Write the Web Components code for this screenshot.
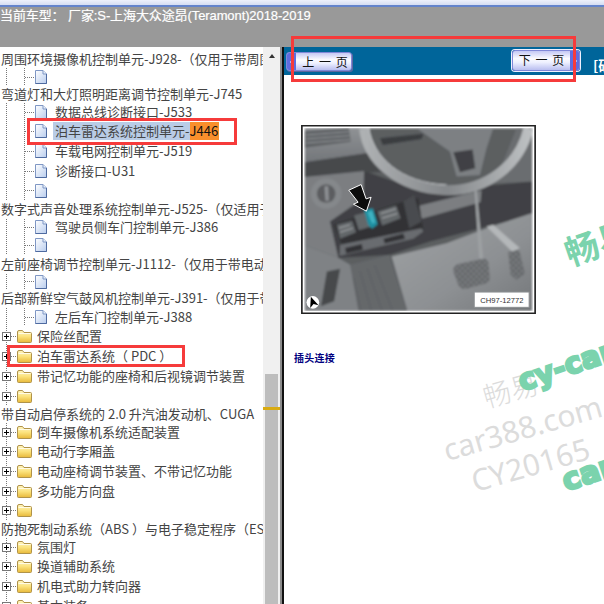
<!DOCTYPE html>
<html lang="zh">
<head>
<meta charset="utf-8">
<title>车型维修资料</title>
<style>
  html, body { margin: 0; padding: 0; background: #fff; }
  body { width: 604px; height: 604px; overflow: hidden; position: relative; }
</style>
</head>
<body>
<title-bar>当前车型： 厂家:S-上海大众途昂(Teramont)2018-2019</title-bar>
<split-view>
  <tree-pane slot="tree">
    <tree-row kind="plain" h="18">周围环境摄像机控制单元-J928-（仅用于带周围环境摄像机的车辆）</tree-row>
    <tree-row kind="leaf" h="18"></tree-row>
    <tree-row kind="plain" h="17">弯道灯和大灯照明距离调节控制单元-J745</tree-row>
    <tree-row kind="leaf" h="18">数据总线诊断接口-J533</tree-row>
    <tree-row kind="leaf" h="20"><hit-text>泊车雷达系统控制单元-<hit-term>J446</hit-term></hit-text></tree-row>
    <tree-row kind="leaf" h="20">车载电网控制单元-J519</tree-row>
    <tree-row kind="leaf" h="20">诊断接口-U31</tree-row>
    <tree-row kind="leaf" h="19"></tree-row>
    <tree-row kind="plain" h="19">数字式声音处理系统控制单元-J525-（仅适用于带数字式声音处理系统）</tree-row>
    <tree-row kind="leaf" h="16">驾驶员侧车门控制单元-J386</tree-row>
    <tree-row kind="leaf" h="20"></tree-row>
    <tree-row kind="plain" h="19">左前座椅调节控制单元-J1112-（仅用于带电动座椅调节装置）</tree-row>
    <tree-row kind="leaf" h="15"></tree-row>
    <tree-row kind="plain" h="19">后部新鲜空气鼓风机控制单元-J391-（仅用于带后部空调）</tree-row>
    <tree-row kind="leaf" h="18">左后车门控制单元-J388</tree-row>
    <tree-row kind="folder" h="20">保险丝配置</tree-row>
    <tree-row kind="folder" h="20">泊车雷达系统（ PDC ）</tree-row>
    <tree-row kind="folder" h="20">带记忆功能的座椅和后视镜调节装置</tree-row>
    <tree-row kind="folder" h="20"></tree-row>
    <tree-row kind="plain" h="17">带自动启停系统的 2.0 升汽油发动机、CUGA</tree-row>
    <tree-row kind="folder" h="18">倒车摄像机系统适配装置</tree-row>
    <tree-row kind="folder" h="20">电动行李厢盖</tree-row>
    <tree-row kind="folder" h="20">电动座椅调节装置、不带记忆功能</tree-row>
    <tree-row kind="folder" h="20">多功能方向盘</tree-row>
    <tree-row kind="folder" h="19"></tree-row>
    <tree-row kind="plain" h="18">防抱死制动系统（ABS ）与电子稳定程序（ESP）</tree-row>
    <tree-row kind="folder" h="18">氛围灯</tree-row>
    <tree-row kind="folder" h="20">换道辅助系统</tree-row>
    <tree-row kind="folder" h="20">机电式助力转向器</tree-row>
    <tree-row kind="folder" h="20">基本装备</tree-row>
  </tree-pane>
  <doc-pane slot="doc">
    <page-toolbar>
      <page-button slot="prev" dir="prev">上 一 页</page-button>
      <page-button slot="next" dir="next">下 一 页</page-button>
      <span slot="extra">[硬</span>
    </page-toolbar>
    <car-figure label="CH97-12772"></car-figure>
    <doc-heading>插头连接</doc-heading>
  </doc-pane>
</split-view>
<water-mark></water-mark>
<red-box style="left:27px;top:118px;width:210px;height:27px"></red-box>
<red-box style="left:7px;top:345px;width:178px;height:22px"></red-box>
<red-box style="left:291px;top:36px;width:285px;height:46px"></red-box>

<script>
class ShadowBase extends HTMLElement {
  static get markup() {
    return '';
  }

  connectedCallback() {
    if (!this.shadowRoot) {
      this.attachShadow({mode: 'open'});
      const template = document.createElement('template');
      template.innerHTML = this.constructor.markup;
      this.shadowRoot.appendChild(template.content.cloneNode(true));
      this.ready();
    }
  }

  ready() {}
}

class TitleBar extends ShadowBase {
  static get markup() {
    return `<style>
      :host { display: block; height: 47px; background: #999; }
      .glass { height: 5px; background: linear-gradient(#eef1fb, #d5ddf2); }
      .line { height: 2px; background: #6484cc; }
      .text { height: 17px; display: flex; align-items: center; white-space: pre; letter-spacing: -.1px;
        color: #fff; -webkit-text-stroke: .2px #fff; font: 13px/17px "Liberation Sans", "Noto Sans CJK SC", sans-serif; }
    </style>
    <div class="glass"></div><div class="line"></div>
    <div class="text"><slot></slot></div>`;
  }
}

class SplitView extends ShadowBase {
  static get markup() {
    return `<style>
      :host { display: flex; height: 557px; overflow: hidden; }
      .tree { flex: 0 0 263px; width: 263px; overflow: hidden; }
      .track { flex: 0 0 17px; background: #f0f0f0; display: flex; flex-direction: column; align-items: center; position: relative; }
      .up { width: 0; height: 0; margin-top: 7px; border: 3.5px solid transparent; border-top: 0; border-bottom: 4px solid #333; }
      .thumb { width: 13px; height: 230px; margin-top: 316px; background: #bdbdbd; }
      .mark { position: absolute; left: 0; right: 0; top: 360px; height: 3px; background: #d9ab12; }
      .rule { flex: 0 0 2px; background: #8c8c8c; }
      .edge { flex: 0 0 2px; background: #111; }
      .doc { flex: 1; min-width: 0; overflow: hidden; }
    </style>
    <div class="tree"><slot name="tree"></slot></div>
    <div class="track"><div class="up"></div><div class="thumb"></div><div class="mark"></div></div>
    <div class="rule"></div><div class="edge"></div>
    <div class="doc"><slot name="doc"></slot></div>`;
  }
}

class TreePane extends ShadowBase {
  static get markup() {
    return `<style>
      :host { display: block; height: 100%; padding-top: 3px; box-sizing: border-box; overflow: hidden; background: #fff;
        color: #444; font: 13px "Noto Sans CJK SC", "Liberation Sans", sans-serif; }
    </style><slot></slot>`;
  }
}

const DOTS_V = 'repeating-linear-gradient(to bottom, #777 0 1px, transparent 1px 2px)';
const DOTS_H = 'repeating-linear-gradient(to right, #777 0 1px, transparent 1px 2px)';

const FILE_ICON = `<svg width="12" height="14" viewBox="0 0 12 14">
  <defs><linearGradient id="f" x1="0" y1="0" x2="1" y2="1"><stop offset="0" stop-color="#fff"/><stop offset="1" stop-color="#b9cdee"/></linearGradient></defs>
  <path d="M.5.5H8L11.5 4V13.5H.5Z" fill="url(#f)" stroke="#7f97c4"/>
  <path d="M8 .5V4H11.5" fill="#e8effb" stroke="#7f97c4"/>
  <path d="M11.5 4V13.5H.5" fill="none" stroke="#4e6aa0"/>
</svg>`;

const FOLDER_ICON = `<svg width="15" height="13" viewBox="0 0 15 13">
  <defs><linearGradient id="d" x1="0" y1="0" x2="0" y2="1"><stop offset="0" stop-color="#fff6c4"/><stop offset=".5" stop-color="#fbe27c"/><stop offset="1" stop-color="#e8b93a"/></linearGradient></defs>
  <path d="M.5 3V11.5Q.5 12.5 1.5 12.5H13.5Q14.5 12.5 14.5 11.5V3.5Q14.5 2.5 13.5 2.5H7L5.5 .5H2Q.5 .5 .5 2Z" fill="url(#d)" stroke="#b0934a"/>
  <path d="M1.5 3.5H13.5" stroke="#fffbe6"/>
</svg>`;

const PLUS_BOX = `<svg width="9" height="9" viewBox="0 0 9 9">
  <rect x=".5" y=".5" width="8" height="8" fill="#fff" stroke="#777"/>
  <path d="M2 4.5H7M4.5 2V7" stroke="#000"/>
</svg>`;

class TreeRow extends ShadowBase {
  static get markup() {
    return `<style>
      :host { display: flex; align-items: center; white-space: pre; height: 20px; background-repeat: no-repeat; }
      .icons { display: flex; align-items: center; flex: none; }
      .label { display: block; margin-top: -2px; }
      svg { display: block; }
      :host([kind="plain"]) { padding-left: 1px; }
      :host([kind="leaf"]) { padding-left: 35px; }
      :host([kind="leaf"]) .icons { margin-right: 8px; }
      :host([kind="folder"]) { padding-left: 2px; }
      :host([kind="folder"]) .plus { margin-right: 6px; }
      :host([kind="folder"]) .icons { margin-right: 5px; }
    </style>
    <div class="icons"></div><div class="label"><slot></slot></div>`;
  }

  ready() {
    const kind = this.getAttribute('kind');
    const height = Number(this.getAttribute('h')) || 20;
    this.style.height = height + 'px';
    const mid = Math.floor(height / 2);
    const icons = this.shadowRoot.querySelector('.icons');
    if (kind === 'leaf') {
      icons.innerHTML = FILE_ICON;
      this.style.backgroundImage = [DOTS_V, DOTS_V, DOTS_H].join(',');
      this.style.backgroundSize = `1px ${height}px, 1px ${height}px, 10px 1px`;
      this.style.backgroundPosition = `6px 0, 24px 0, 25px ${mid}px`;
    } else if (kind === 'folder') {
      icons.innerHTML = `<span class="plus">${PLUS_BOX}</span>${FOLDER_ICON}`;
      this.style.backgroundImage = [DOTS_V, DOTS_H].join(',');
      this.style.backgroundSize = `1px ${height}px, 6px 1px`;
      this.style.backgroundPosition = `6px 0, 11px ${mid}px`;
    }
  }
}

class HitText extends ShadowBase {
  static get markup() {
    return `<style>
      :host { display: inline-block; height: 18px; line-height: 18px; padding-left: 2px; margin-left: -2px; background: #b9cce6; color: #444; }
    </style><slot></slot>`;
  }
}

class HitTerm extends ShadowBase {
  static get markup() {
    return `<style>
      :host { display: inline-block; height: 18px; padding-right: 1px; background: #f98f2c; color: #111; }
    </style><slot></slot>`;
  }
}

class DocPane extends ShadowBase {
  static get markup() {
    return `<style>
      :host { display: block; height: 100%; background: #fff; }
    </style><slot></slot>`;
  }
}

class PageToolbar extends ShadowBase {
  static get markup() {
    return `<style>
      :host { display: flex; align-items: flex-start; height: 28px; background: #00659a; padding-left: 2px; overflow: hidden; }
      .prev { margin-top: 5px; }
      .next { margin-top: 3px; margin-left: auto; }
      .extra { margin: 9px 0 0 13px; width: 11px; flex: none; white-space: nowrap; color: #fff;
        font: bold 14px/18px "Noto Sans CJK SC", sans-serif; }
    </style>
    <div class="prev"><slot name="prev"></slot></div>
    <div class="next"><slot name="next"></slot></div>
    <div class="extra"><slot name="extra"></slot></div>`;
  }
}

class PageButton extends ShadowBase {
  static get markup() {
    return `<style>
      :host { display: flex; box-sizing: border-box; height: 19px; width: 66px; border: 1px solid #8088d8; border-radius: 3px;
        overflow: hidden; color: #111; background: linear-gradient(#c4c8f4, #fbfbff 40%, #eef0ff 60%, #b9bef0);
        box-shadow: 1px 1px 0 #5f66a0; font: 12px/17px "Noto Sans CJK SC", sans-serif; white-space: pre; word-spacing: 2px; }
      :host([dir="next"]) { flex-direction: row-reverse; height: 21px; width: 68px; border: 1px solid #8088d8; box-shadow: 0 0 0 1px #f0f0ff; }
      .tab { flex: 0 0 9px; display: flex; align-items: center; justify-content: center; background: #5f6ce0; }
      .label { flex: 1; text-align: center; padding-left: 3px; }
      :host([dir="next"]) .label { line-height: 17px; padding-left: 0; }
      svg { display: block; }
    </style>
    <div class="tab"></div><div class="label"><slot></slot></div>`;
  }

  ready() {
    const back = this.getAttribute('dir') === 'prev';
    const points = back ? '5,0 5,8 1,4' : '1,0 1,8 5,4';
    this.shadowRoot.querySelector('.tab').innerHTML =
      `<svg width="6" height="8" viewBox="0 0 6 8"><polygon points="${points}" fill="#fff"/></svg>`;
  }
}

class CarFigure extends ShadowBase {
  static get markup() {
    return `<style>
      :host { display: block; width: 235px; height: 189px; margin: 50px 0 0 17px; }
      svg { display: block; width: 235px; height: 189px; }
      text { font-family: "Liberation Sans", sans-serif; }
    </style>
    <svg viewBox="33 30 705 568">
      <defs>
        <filter id="soft" x="0" y="0" width="1" height="1"><feGaussianBlur stdDeviation="2.4"/></filter>
        <linearGradient id="floor" x1="0" y1="0" x2="1" y2="1"><stop offset="0" stop-color="#a0a3a5"/><stop offset=".6" stop-color="#8d9093"/><stop offset="1" stop-color="#74777a"/></linearGradient>
        <linearGradient id="wheel" x1="0" y1="0" x2="1" y2="0"><stop offset="0" stop-color="#aeb1b3"/><stop offset=".5" stop-color="#85888b"/><stop offset="1" stop-color="#bcbfc1"/></linearGradient>
        <linearGradient id="dash" x1="0" y1="0" x2="0" y2="1"><stop offset="0" stop-color="#8f9295"/><stop offset="1" stop-color="#73767a"/></linearGradient>
        <pattern id="hatch" width="12" height="12" patternUnits="userSpaceOnUse" patternTransform="rotate(45)">
          <rect width="12" height="12" fill="#777a7d"/><path d="M0 0H12M0 0V12" stroke="#45474a" stroke-width="2.5"/>
        </pattern>
      </defs>
      <rect x="33" y="30" width="705" height="568" fill="#fff"/>
      <rect x="35" y="32" width="701" height="564" fill="none" stroke="#222" stroke-width="5"/>
      <g filter="url(#soft)">
        <rect x="44" y="40" width="683" height="548" fill="#5b5e61"/>
        <!-- dash and vent -->
        <path d="M44 40H230L262 110L44 142Z" fill="url(#dash)"/>
        <path d="M44 48L176 40L182 80L44 98Z" fill="#5f6265"/>
        <path d="M48 60L176 50M48 72L178 62M48 84L180 74" stroke="#93969a" stroke-width="3"/>
        <path d="M44 142L250 112L290 170L44 186Z" fill="#47494c"/>
        <path d="M44 186L225 168L222 250L120 320L145 430L44 392Z" fill="#7b7e81"/>
        <circle cx="108" cy="236" r="46" fill="#85888b"/>
        <circle cx="108" cy="236" r="28" fill="#5b5d60"/>
        <path d="M103 214H114L116 258H106Z" fill="#8e9194"/>
        <!-- right dash panel -->
        <path d="M222 168L400 230L726 200V300L590 335L420 380L300 420L145 430L120 320L220 250Z" fill="#3f4144"/>
        <path d="M378 275L575 226L572 262L395 312Z" fill="#7b7e81"/>
        <!-- floor and pedals -->
        <path d="M305 425L470 385L590 340L726 295V588H352Z" fill="url(#floor)"/>
        <path d="M726 40V200L600 205L640 140L680 40Z" fill="#6a6d70"/>
        <path d="M590 335L610 330L690 400L668 412Z" fill="#b4b7b9"/>
        <path d="M552 200L558 200L580 432L568 432Z" fill="#9da0a3"/>
        <path d="M505 448L578 432Q592 430 596 445L600 490Q600 503 588 506L530 522Q512 525 505 510L490 470Q488 455 505 448Z" fill="url(#hatch)"/>
        <path d="M655 412L688 405L706 478L680 495L662 480Z" fill="url(#hatch)"/>
        <!-- steering wheel -->
        <path d="M380 40H610L590 100L570 180L500 185L480 110Z" fill="#7d8083"/>
        <path d="M490 112L548 104L556 160L510 172Z" fill="#3f4144"/>
        <path d="M222 40C232 130 320 222 470 226C590 228 690 150 716 40" fill="none" stroke="url(#wheel)" stroke-width="30"/>
        <path d="M236 40C250 125 330 205 470 210" fill="none" stroke="#c2c5c7" stroke-width="3"/>
        <path d="M270 70L400 56L395 72L278 90Z" fill="#3a3c3f"/>
        <!-- connector bracket -->
        <path d="M132 330L335 262L385 250L400 345L156 392Z" fill="#313235"/>
        <path d="M150 390L395 340L400 350L370 372L148 424Z" fill="#696c70"/>
        <path d="M340 260L372 240L395 320L358 340Z" fill="#4a4c50"/>
        <path d="M140 330L186 318L198 352L150 372ZM192 302L236 290L246 334L206 346ZM262 290L318 272L332 310L276 332Z" fill="#64676b"/>
        <path d="M146 340L180 330M150 352L188 340M272 296L318 282M276 310L322 296" stroke="#a9acae" stroke-width="3"/>
        <path d="M165 400L215 388L218 405L168 416ZM280 372L340 356L345 372L284 386Z" fill="#313235"/>
        <path d="M222 286L248 280L263 328L246 342L234 330Z" fill="#1f8fa0"/>
        <path d="M232 292L246 288L256 322L246 326Z" fill="#3fb3c2"/>
        <!-- knee panel -->
        <path d="M180 450L298 420L350 588H205Z" fill="#65686b"/>
        <path d="M190 490L212 588M210 470L244 588M232 462L276 588M254 452L308 588" stroke="#57595c" stroke-width="2"/>
        <path d="M44 392L145 430L180 450L205 588H44Z" fill="#7f8285"/>
        <path d="M110 470L150 462L132 560L92 575Z" fill="#47494c"/>
      </g>
      <polygon points="176,226 213,209 228,252 243,247 229,289 190,268 204,262" fill="#0c0c0c" stroke="#fff" stroke-width="3"/>
      <circle cx="68" cy="563" r="19" fill="#fff"/>
      <path d="M62 546L85 572L70 568L60 580Z" fill="#000"/>
      <rect x="553" y="532" width="165" height="46" fill="#fff" stroke="#8b8e91" stroke-width="3"/>
      <text id="tag" x="636" y="565" text-anchor="middle" font-size="23" fill="#333"></text>
    </svg>`;
  }

  ready() {
    this.shadowRoot.getElementById('tag').textContent = this.getAttribute('label');
  }
}

class DocHeading extends ShadowBase {
  static get markup() {
    return `<style>
      :host { display: block; margin: 37px 0 0 10px; color: #00007f;
        font: bold 10px/14px "Noto Sans CJK SC", sans-serif; letter-spacing: .25px; }
    </style><slot></slot>`;
  }
}

class WaterMark extends ShadowBase {
  static get markup() {
    return `<style>
      :host { position: absolute; left: 284px; top: 75px; width: 320px; height: 529px; overflow: hidden; pointer-events: none; display: block; }
      span { position: absolute; white-space: nowrap; transform-origin: 0 100%; line-height: 1; }
      .gray { transform: rotate(-16deg); color: #dcdcdc; font-family: "Noto Sans", "Noto Sans CJK SC", sans-serif; }
      .green { transform: rotate(-19deg); color: #7bd3ad; font-family: "DejaVu Sans", "Noto Sans CJK SC", sans-serif; font-weight: 700; }
      .fat { -webkit-text-stroke: 2.5px #7bd3ad; }
    </style>
    <span class="green" style="left:287px;top:160px;font-size:34px;font-family:'Noto Sans CJK SC',sans-serif">畅易</span>
    <span class="gray" style="left:203px;top:307px;font-size:28px;font-family:'Noto Sans CJK SC',sans-serif;font-weight:300">畅易</span>
    <span class="gray" style="left:164px;top:360px;font-size:30px">car388.com</span>
    <span class="gray" style="left:192px;top:391px;font-size:30px">CY20165</span>
    <span class="green fat" style="left:240px;top:292px;font-size:29px">cy-car</span>
    <span class="green fat" style="left:284px;top:391px;font-size:30px">car</span>`;
  }
}

class RedBox extends ShadowBase {
  static get markup() {
    return `<style>
      :host { position: absolute; display: block; box-sizing: border-box; border: 3px solid #f63b3b; pointer-events: none; }
    </style>`;
  }
}

customElements.define('title-bar', TitleBar);
customElements.define('split-view', SplitView);
customElements.define('tree-pane', TreePane);
customElements.define('tree-row', TreeRow);
customElements.define('hit-text', HitText);
customElements.define('hit-term', HitTerm);
customElements.define('doc-pane', DocPane);
customElements.define('page-toolbar', PageToolbar);
customElements.define('page-button', PageButton);
customElements.define('car-figure', CarFigure);
customElements.define('doc-heading', DocHeading);
customElements.define('water-mark', WaterMark);
customElements.define('red-box', RedBox);
</script>
</body>
</html>
